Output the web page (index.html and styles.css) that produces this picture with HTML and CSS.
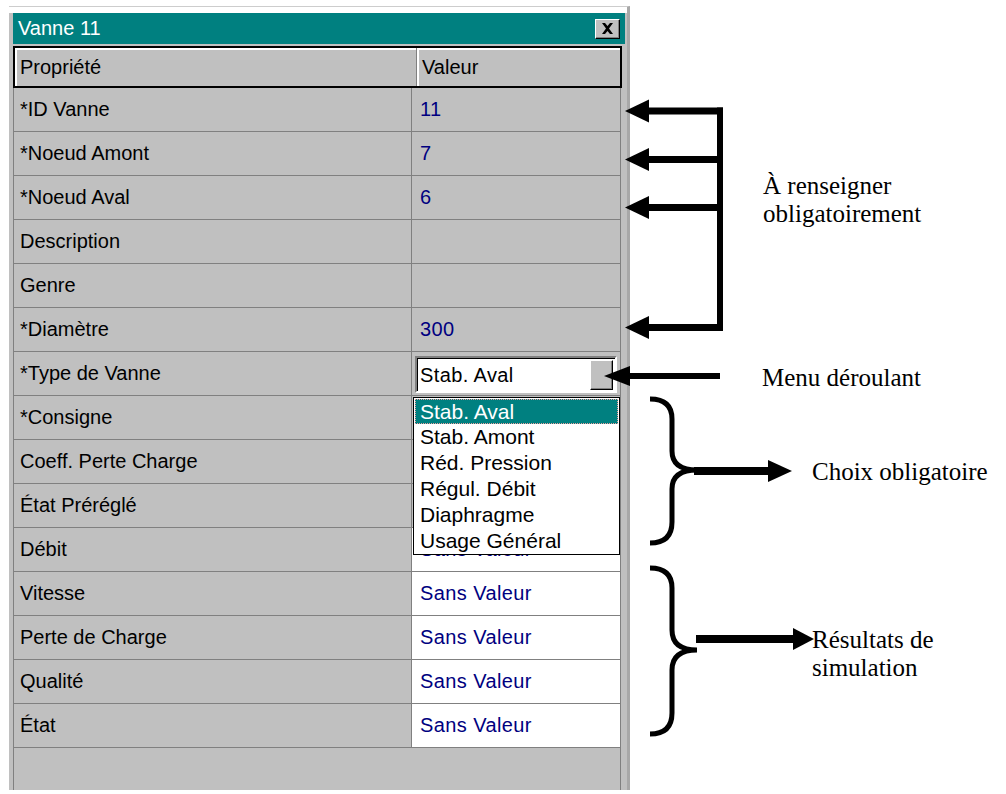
FILE: index.html
```html
<!DOCTYPE html>
<html lang="fr">
<head>
    <meta charset="UTF-8">
    <title>Vanne 11</title>
    <link rel="stylesheet" href="styles.css">
</head>
<body>
    <div class="window">
        <div class="titlebar">
            <span>Vanne 11</span>
            <div class="close">
                <svg width="13" height="11" viewBox="0 0 13 11"><path d="M1 0h3l2.5 3 2.5-3h3l-4 5.5 4 5.5h-3l-2.5-3-2.5 3h-3l4-5.5z" fill="#000"/></svg>
            </div>
        </div>

        <div class="grid">
            <div class="head">
                <div class="hcell hprop">Propriété</div>
                <div class="hcell hval">Valeur</div>
            </div>
            <div class="row"><div class="prop">*ID Vanne</div><div class="val">11</div></div>
            <div class="row"><div class="prop">*Noeud Amont</div><div class="val">7</div></div>
            <div class="row"><div class="prop">*Noeud Aval</div><div class="val">6</div></div>
            <div class="row"><div class="prop">Description</div><div class="val"></div></div>
            <div class="row"><div class="prop">Genre</div><div class="val"></div></div>
            <div class="row"><div class="prop">*Diamètre</div><div class="val">300</div></div>
            <div class="row">
                <div class="prop">*Type de Vanne</div>
                <div class="val combo-cell">
                    <div class="combo">
                        <span class="combo-text">Stab. Aval</span>
                        <div class="combo-btn"></div>
                    </div>
                    <div class="dropdown">
                        <div class="opt sel">Stab. Aval</div>
                        <div class="opt">Stab. Amont</div>
                        <div class="opt">Réd. Pression</div>
                        <div class="opt">Régul. Débit</div>
                        <div class="opt">Diaphragme</div>
                        <div class="opt">Usage Général</div>
                    </div>
                </div>
            </div>
            <div class="row"><div class="prop">*Consigne</div><div class="val"></div></div>
            <div class="row"><div class="prop">Coeff. Perte Charge</div><div class="val"></div></div>
            <div class="row"><div class="prop">État Préréglé</div><div class="val"></div></div>
            <div class="row"><div class="prop">Débit</div><div class="val white">Sans Valeur</div></div>
            <div class="row"><div class="prop">Vitesse</div><div class="val white">Sans Valeur</div></div>
            <div class="row"><div class="prop">Perte de Charge</div><div class="val white">Sans Valeur</div></div>
            <div class="row"><div class="prop">Qualité</div><div class="val white">Sans Valeur</div></div>
            <div class="row"><div class="prop">État</div><div class="val white">Sans Valeur</div></div>
        </div>
    </div>

    <!-- annotation arrows and braces -->
    <svg class="marks" width="1006" height="794" viewBox="0 0 1006 794">
        <g fill="#000">
            <rect x="645" y="107.5" width="78" height="7"/>
            <rect x="645" y="156" width="78" height="7"/>
            <rect x="645" y="204" width="78" height="7"/>
            <rect x="645" y="324" width="78" height="7"/>
            <rect x="717" y="107.5" width="6" height="223.5"/>
            <polygon points="625,111 649,99.5 649,122.5"/>
            <polygon points="625,159.5 649,148 649,171"/>
            <polygon points="625,207.5 649,196 649,219"/>
            <polygon points="625,327.5 649,316 649,339"/>

            <rect x="626" y="373" width="94" height="6"/>
            <polygon points="604,376 630,366 630,386"/>

            <rect x="694" y="467" width="76" height="8"/>
            <polygon points="792,471 768,460 768,482"/>

            <rect x="696" y="635" width="99" height="8"/>
            <polygon points="814,639 793,628 793,650"/>
        </g>
        <g fill="none" stroke="#000" stroke-width="5">
            <path d="M650 399 Q672 399 672 419 L672 451 Q672 470 697 470 Q672 470 672 489 L672 522 Q672 543 650 543"/>
            <path d="M650 568 Q672 568 672 588 L672 630 Q672 650 697 650 Q672 650 672 670 L672 713 Q672 734 650 734"/>
        </g>
    </svg>

    <div class="note note-required">À renseigner<br>obligatoirement</div>
    <div class="note note-menu">Menu déroulant</div>
    <div class="note note-choice">Choix obligatoire</div>
    <div class="note note-results">Résultats de<br>simulation</div>
</body>
</html>
```

FILE: styles.css
```css
body {
    margin: 0;
    width: 1006px;
    height: 794px;
    position: relative;
    overflow: hidden;
    background-color: #ffffff;
    font-family: "Liberation Sans", Arial, sans-serif;
}

.window {
    margin: 6px 0 0 9px;
    width: 621px;
    height: 784px;
    box-sizing: border-box;
    border-top: 1px solid #cdcdcd;
    border-right: 3px solid #a8a8a8;
    padding: 6px 2px 0 4px;
    background: linear-gradient(#ffffff 6px, #c0c0c0 6px);
    display: flex;
    flex-direction: column;
}

.titlebar {
    height: 31px;
    flex: none;
    background-color: #008080;
    color: #ffffff;
    font-size: 20px;
    display: flex;
    align-items: center;
    justify-content: space-between;
    padding: 0 5px 0 5px;
}

.close {
    width: 25px;
    height: 20px;
    box-sizing: border-box;
    background-color: #c0c0c0;
    border: 1px solid;
    border-color: #ffffff #000000 #000000 #ffffff;
    box-shadow: inset -1px -1px 0 #808080;
    display: flex;
    align-items: center;
    justify-content: center;
}

.grid {
    flex: 1;
    width: 608px;
    margin-top: 2px;
    box-sizing: border-box;
    border-left: 1px solid #808080;
    border-right: 1px solid #808080;
    font-size: 20px;
}

.head {
    display: flex;
    height: 42px;
    box-sizing: border-box;
    margin: 0 -2px 0 -1px;
    border: 2px solid #000000;
}

.hcell {
    display: flex;
    align-items: center;
    padding-left: 5px;
    box-shadow: inset 2px 2px 0 #ffffff;
}

.hprop {
    width: 396px;
    border-right: 1px solid #808080;
}

.hval {
    flex: 1;
}

.row {
    display: flex;
    height: 44px;
    box-sizing: border-box;
    border-bottom: 1px solid #808080;
}

.prop {
    width: 398px;
    box-sizing: border-box;
    border-right: 1px solid #808080;
    padding-left: 6px;
    display: flex;
    align-items: center;
    color: #000000;
}

.val {
    flex: 1;
    padding-left: 8px;
    display: flex;
    align-items: center;
    color: #000080;
    letter-spacing: 0.4px;
}

.val.white {
    background-color: #ffffff;
}

.combo-cell {
    position: relative;
    padding: 4px 3px 2px 3px;
}

.combo {
    flex: 1;
    height: 100%;
    box-sizing: border-box;
    background-color: #ffffff;
    border: 2px solid;
    border-color: #808080 #ffffff #ffffff #808080;
    box-shadow: inset 1px 1px 0 #000000;
    display: flex;
    align-items: center;
    justify-content: space-between;
    padding: 2px 2px 1px 3px;
    color: #000000;
}

.combo-btn {
    width: 23px;
    height: 100%;
    box-sizing: border-box;
    background-color: #c0c0c0;
    border: 1px solid;
    border-color: #ffffff #000000 #000000 #ffffff;
    box-shadow: inset -1px -1px 0 #808080;
}

.dropdown {
    position: absolute;
    left: 1px;
    top: 45px;
    width: 207px;
    height: 158px;
    box-sizing: border-box;
    background-color: #ffffff;
    border: 1px solid #000000;
    color: #000000;
    font-size: 21px;
    letter-spacing: 0;
    z-index: 2;
}

.opt {
    height: 26px;
    line-height: 26px;
    padding-left: 6px;
}

.opt.sel {
    background-color: #008080;
    color: #ffffff;
    outline: 1px dotted #f0a0a0;
    outline-offset: -1px;
    height: 25px;
    line-height: 25px;
    margin: 1px 1px 0 1px;
    padding-left: 5px;
}

.marks {
    position: absolute;
    left: 0;
    top: 0;
    pointer-events: none;
}

.note {
    position: absolute;
    font-family: "Liberation Serif", "Times New Roman", serif;
    font-size: 25px;
    line-height: 28px;
    color: #000000;
}

.note-required {
    left: 763px;
    top: 172px;
}

.note-menu {
    left: 762px;
    top: 364px;
}

.note-choice {
    left: 812px;
    top: 458px;
}

.note-results {
    left: 812px;
    top: 626px;
}
```
